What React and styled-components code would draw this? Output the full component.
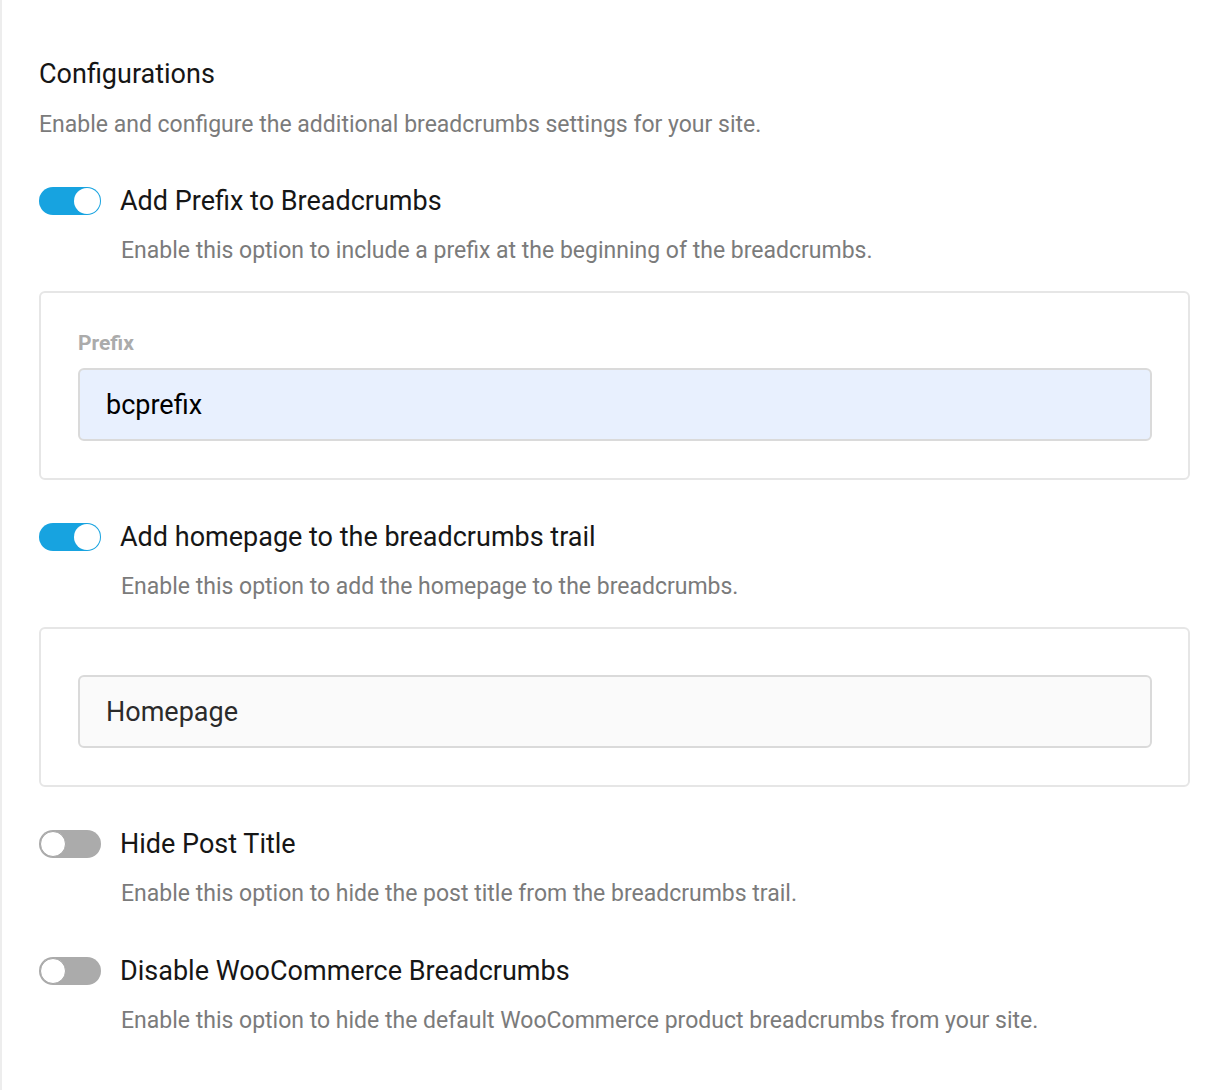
import React from 'react';
import styled, { createGlobalStyle } from 'styled-components';

const GlobalStyle = createGlobalStyle`
    html, body {
        margin: 0;
        padding: 0;
        background: #ffffff;
        font-family: Roboto, "Liberation Sans", Arial, sans-serif;
    }
`;

const Page = styled.div`
    min-height: 1090px;
    box-sizing: border-box;
    border-left: 2px solid #ededed;
    padding: 58px 30px 40px 37px;
`;

const Heading = styled.h2`
    margin: 0;
    font-size: 27px;
    line-height: 32px;
    font-weight: 400;
    color: #161616;
`;

const Intro = styled.p`
    margin: 20px 0 47px;
    font-size: 23px;
    line-height: 30px;
    color: #7b7b7b;
`;

const Block = styled.div`
    margin-bottom: ${(p) => (p.$hasCard ? '43px' : '48px')};
`;

const Row = styled.label`
    display: flex;
    align-items: center;
    gap: 19px;
    height: 28px;
    cursor: pointer;
`;

const Track = styled.span`
    position: relative;
    flex: 0 0 auto;
    width: 62px;
    height: 28px;
    border-radius: 14px;
    background: ${(p) => (p.$on ? '#17a3e0' : '#ababab')};
`;

const Knob = styled.span`
    position: absolute;
    top: 1px;
    left: ${(p) => (p.$on ? '35px' : '1px')};
    width: 26px;
    height: 26px;
    box-sizing: border-box;
    border-radius: 50%;
    background: #ffffff;
    border: ${(p) => (p.$on ? 'none' : '1.5px solid #a5a5a5')};
`;

const Label = styled.span`
    font-size: 27px;
    line-height: 32px;
    font-weight: 400;
    color: #161616;
`;

const Desc = styled.p`
    margin: 21px 0 0 82px;
    font-size: 23px;
    line-height: 30px;
    color: #7b7b7b;
`;

const Card = styled.div`
    margin-top: 25px;
    border: 2px solid #e6e6e6;
    border-radius: 6px;
    padding: ${(p) => (p.$labelled ? '37px' : '46px')} 36px 37px 37px;
`;

const FieldLabel = styled.div`
    margin-bottom: 12px;
    font-size: 21px;
    line-height: 26px;
    font-weight: 700;
    color: #ababab;
`;

const Input = styled.input`
    display: block;
    width: 100%;
    height: 73px;
    box-sizing: border-box;
    padding: 0 26px;
    border: 2px solid #dadada;
    border-radius: 6px;
    outline: none;
    font-family: Roboto, "Liberation Sans", Arial, sans-serif;
    font-size: 27px;
    color: ${(p) => (p.$filled ? '#000000' : '#2b2b2b')};
    background: ${(p) => (p.$filled ? '#e8f0fe' : '#fafafa')};
`;

const Toggle = ({ on }) => (
    <Track $on={on}>
        <Knob $on={on} />
    </Track>
);

const settings = [
    {
        title: 'Add Prefix to Breadcrumbs',
        desc: 'Enable this option to include a prefix at the beginning of the breadcrumbs.',
        on: true,
        field: { label: 'Prefix', value: 'bcprefix', filled: true },
    },
    {
        title: 'Add homepage to the breadcrumbs trail',
        desc: 'Enable this option to add the homepage to the breadcrumbs.',
        on: true,
        field: { label: '', value: 'Homepage', filled: false },
    },
    {
        title: 'Hide Post Title',
        desc: 'Enable this option to hide the post title from the breadcrumbs trail.',
        on: false,
    },
    {
        title: 'Disable WooCommerce Breadcrumbs',
        desc: 'Enable this option to hide the default WooCommerce product breadcrumbs from your site.',
        on: false,
    },
];

const App = () => {
    return (
        <>
            <GlobalStyle />
            <Page>
                <Heading>Configurations</Heading>
                <Intro>Enable and configure the additional breadcrumbs settings for your site.</Intro>

                {settings.map((s) => (
                    <Block key={s.title} $hasCard={!!s.field}>
                        <Row>
                            <Toggle on={s.on} />
                            <Label>{s.title}</Label>
                        </Row>
                        <Desc>{s.desc}</Desc>
                        {s.field && (
                            <Card $labelled={!!s.field.label}>
                                {s.field.label && <FieldLabel>{s.field.label}</FieldLabel>}
                                <Input readOnly value={s.field.value} $filled={s.field.filled} />
                            </Card>
                        )}
                    </Block>
                ))}
            </Page>
        </>
    );
};

export default App;
